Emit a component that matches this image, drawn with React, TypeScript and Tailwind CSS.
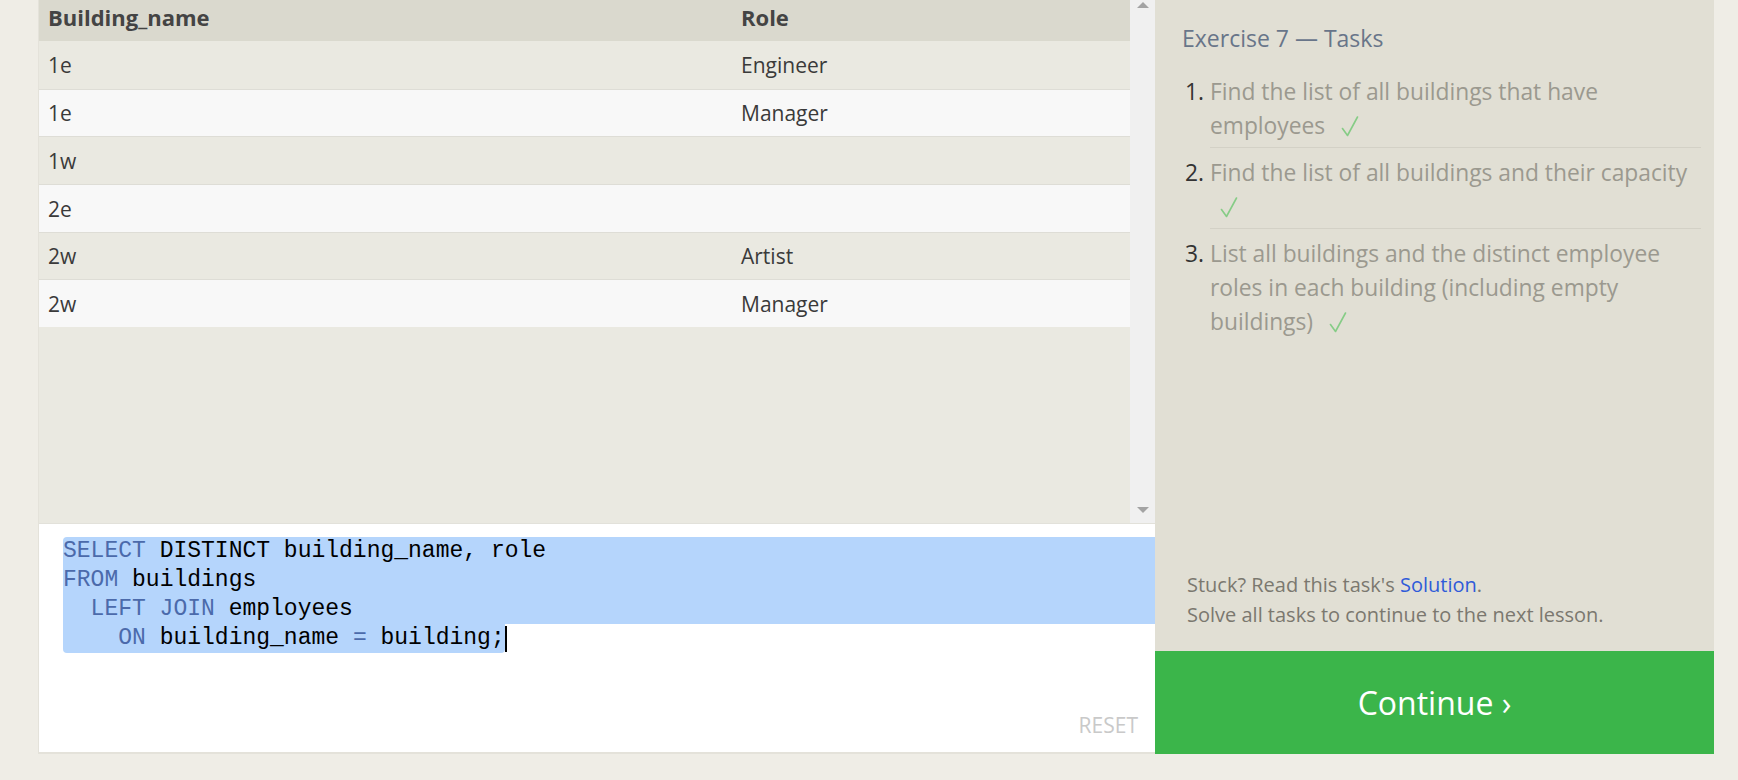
const rows = [
  { building: "1e", role: "Engineer" },
  { building: "1e", role: "Manager" },
  { building: "1w", role: "" },
  { building: "2e", role: "" },
  { building: "2w", role: "Artist" },
  { building: "2w", role: "Manager" },
];

const tasks = [
  "Find the list of all buildings that have employees",
  "Find the list of all buildings and their capacity",
  "List all buildings and the distinct employee roles in each building (including empty buildings)",
];

const Kw = ({ children }: { children: string }) => (
  <span className="text-[#4b6aab]">{children}</span>
);

const Check = () => (
  <svg
    className="ml-[10px] inline-block align-[-3px]"
    width="18"
    height="21"
    viewBox="0 0 18 21"
    fill="none"
  >
    <path
      d="M1.5 12.5 L6.5 19.5 L16.5 1"
      stroke="#86cc86"
      strokeWidth="1.6"
      strokeLinecap="round"
      strokeLinejoin="round"
    />
  </svg>
);

const App = () => {
  return (
    <div className="min-h-screen bg-[#efede6] font-['Open_Sans',sans-serif]">
      <div className="flex pl-[38px]">
        {/* left: results + editor */}
        <div className="flex w-[1117px] flex-col border-b-2 border-l border-[#e4e2da]">
          <div className="flex h-[523px]">
            <div className="flex-1 bg-[#eae9e1] text-[21px] text-[#3a3a3a]">
              <div className="grid h-[41px] grid-cols-[693px_1fr] items-center bg-[#dad9ce] pb-[6px] text-[22px] font-bold text-[#444]">
                <div className="pl-[9px]">Building_name</div>
                <div className="pl-[9px]">Role</div>
              </div>
              {rows.map((r, i) => (
                <div
                  key={i}
                  className={`grid h-[47.7px] grid-cols-[693px_1fr] items-center pt-[2px] ${
                    i > 0 ? "border-t border-[#deddd6]" : ""
                  } ${i % 2 === 0 ? "bg-[#eae9e1]" : "bg-[#f8f8f8]"}`}
                >
                  <div className="pl-[9px]">{r.building}</div>
                  <div className="pl-[9px]">{r.role}</div>
                </div>
              ))}
            </div>
            <div className="flex w-[25px] flex-col items-center justify-between bg-[#f0f0f0] pb-[10px] pt-[2px]">
              <svg width="12" height="6" viewBox="0 0 12 6">
                <path d="M0 6 L6 0 L12 6 Z" fill="#a3a3a3" />
              </svg>
              <svg width="12" height="6" viewBox="0 0 12 6">
                <path d="M0 0 L12 0 L6 6 Z" fill="#a3a3a3" />
              </svg>
            </div>
          </div>

          <div className="flex h-[229px] flex-col justify-between border-t border-[#e2e1da] bg-white pl-[24px] pt-[13px]">
            <div className="whitespace-pre font-['Liberation_Mono',monospace] text-[23px] leading-[29px] text-black">
              <div className="rounded-tl-[4px] bg-[#b5d5fc]">
                <Kw>SELECT</Kw> DISTINCT building_name, role
              </div>
              <div className="bg-[#b5d5fc]">
                <Kw>FROM</Kw> buildings
              </div>
              <div className="bg-[#b5d5fc]">
                {"  "}
                <Kw>LEFT JOIN</Kw> employees
              </div>
              <div className="flex">
                <div className="rounded-b-[4px] bg-[#b5d5fc]">
                  {"    "}
                  <Kw>ON</Kw> building_name <Kw>=</Kw> building;
                </div>
                <span className="mt-[2px] h-[26px] w-[2px] bg-black" />
              </div>
            </div>
            <div className="self-end pb-[11px] pr-[17px] text-[21px] text-[#c9c9c9]">
              RESET
            </div>
          </div>
        </div>

        {/* right: tasks */}
        <div className="flex w-[559px] flex-col">
          <div className="flex flex-1 flex-col justify-between bg-[#e1dfd4] pb-[21px] pl-[27px] pr-[13px] pt-[22px]">
            <div>
              <h2 className="text-[23px] leading-[32px] text-[#687589]">
                Exercise 7 — Tasks
              </h2>
              <ol className="mt-[13px] list-decimal pl-[28px] text-[22.8px] leading-[34px] text-[#9b998f] marker:text-[#333]">
                {tasks.map((t, i) => (
                  <li
                    key={i}
                    className="border-b border-[#d3d1c6] pb-[4px] pt-[8px] last:border-b-0"
                  >
                    {t} <Check />
                  </li>
                ))}
              </ol>
            </div>
            <div className="pl-[5px] text-[20px] leading-[30px] text-[#7b786f]">
              <p>
                Stuck? Read this task's{" "}
                <span className="text-[#2f5bd9]">Solution</span>.
              </p>
              <p>Solve all tasks to continue to the next lesson.</p>
            </div>
          </div>
          <button className="h-[103px] bg-[#3bb54a] text-[32px] text-white">
            Continue ›
          </button>
        </div>
      </div>
    </div>
  );
};

export default App;
